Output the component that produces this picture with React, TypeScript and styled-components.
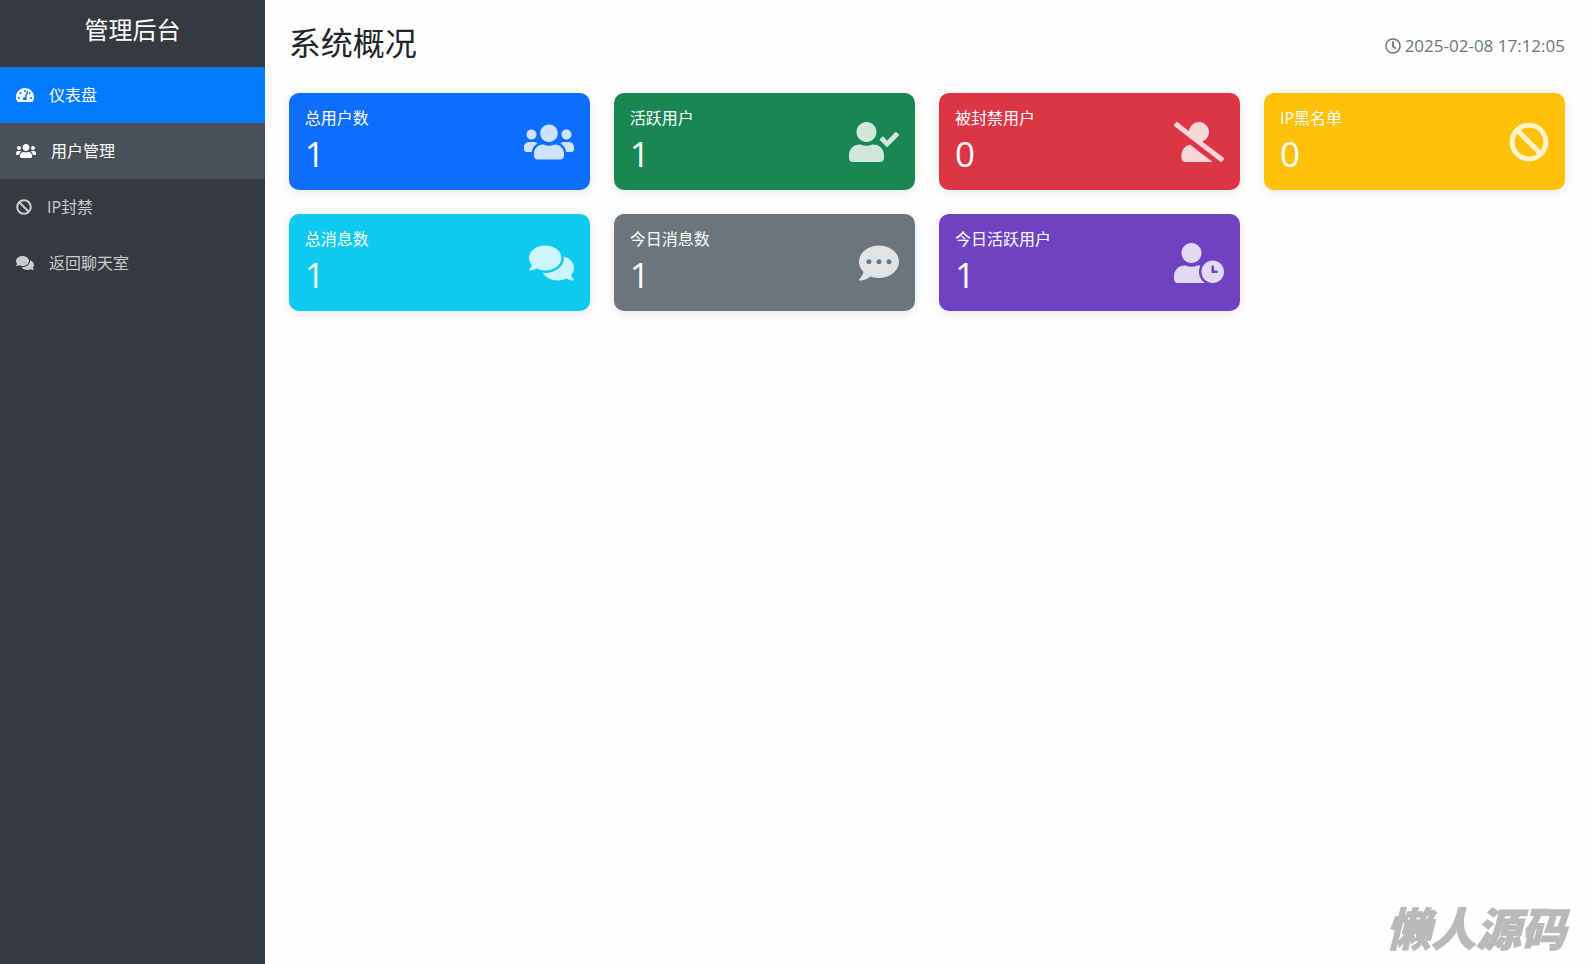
import React from 'react';
import styled, { createGlobalStyle } from 'styled-components';
import type { IconType } from 'react-icons';
import {
  FaBan,
  FaCommentDots,
  FaComments,
  FaRegClock,
  FaTachometerAlt,
  FaUserCheck,
  FaUserClock,
  FaUsers,
  FaUserSlash,
} from 'react-icons/fa';

const GlobalStyle = createGlobalStyle`
  *, *::before, *::after { box-sizing: border-box; }
  body {
    margin: 0;
    background: #fefefe;
    color: #212529;
    font: 400 16px/24px 'Open Sans', 'Noto Sans CJK SC', sans-serif;
  }
`;

const Page = styled.div`
  display: flex;
  min-height: 100vh;
`;

const Sidebar = styled.aside`
  flex: 0 0 calc(100% / 6);
  background: #343a40;
  color: #fff;
`;

const Brand = styled.h2`
  margin: 0;
  padding: 15px 16px 23px;
  font-size: 24px;
  line-height: 29px;
  font-weight: 400;
  text-align: center;
`;

const NavLink = styled.a<{ $state?: 'active' | 'hover'; $iconWidth: number }>`
  display: flex;
  align-items: center;
  gap: 15px;
  padding: 16px;
  color: ${({ $state }) => ($state ? '#fff' : 'rgba(255, 255, 255, 0.75)')};
  background: ${({ $state }) =>
    $state === 'active' ? '#007bff' : $state === 'hover' ? '#495057' : 'transparent'};
  text-decoration: none;

  svg {
    height: 16px;
    width: ${({ $iconWidth }) => $iconWidth}px;
  }
`;

const Main = styled.main`
  flex: 1;
  min-width: 0;
  padding: 24px;
`;

const Header = styled.header`
  display: flex;
  justify-content: space-between;
  align-items: center;
  margin-bottom: 24px;
`;

const Title = styled.h1`
  margin: 0 0 7px;
  font-size: 32px;
  line-height: 38px;
  font-weight: 400;
`;

const Clock = styled.div`
  display: flex;
  align-items: center;
  gap: 4px;
  padding-bottom: 2px;
  color: #6c757d;
  font-size: 17px;

  svg {
    width: 16px;
    height: 16px;
  }
`;

const Grid = styled.section`
  display: grid;
  grid-template-columns: repeat(4, minmax(0, 1fr));
  gap: 24px;
`;

const Card = styled.article<{ $color: string; $iconWidth: number }>`
  display: flex;
  justify-content: space-between;
  align-items: center;
  padding: 16px;
  border-radius: 10px;
  background: ${({ $color }) => $color};
  color: #fff;
  box-shadow: 0 2px 10px rgba(0, 0, 0, 0.1);

  svg {
    height: 40px;
    width: ${({ $iconWidth }) => $iconWidth}px;
    opacity: 0.8;
  }
`;

const Label = styled.h3`
  margin: 0;
  font-size: 16px;
  line-height: 18px;
  font-weight: 400;
`;

const Value = styled.p`
  margin: 0;
  padding-top: 7px;
  font-size: 35px;
  line-height: 40px;
`;

const Watermark = styled.div`
  position: fixed;
  right: 23px;
  bottom: 10px;
  color: #b9b9b9;
  font: italic 900 45px/54px 'Noto Sans CJK SC', sans-serif;
  -webkit-text-stroke: 1px #b9b9b9;
  pointer-events: none;
`;

const links: { text: string; icon: IconType; iconWidth: number; state?: 'active' | 'hover' }[] = [
  { text: '仪表盘', icon: FaTachometerAlt, iconWidth: 18, state: 'active' },
  { text: '用户管理', icon: FaUsers, iconWidth: 20, state: 'hover' },
  { text: 'IP封禁', icon: FaBan, iconWidth: 16 },
  { text: '返回聊天室', icon: FaComments, iconWidth: 18 },
];

const stats: { label: string; value: number; color: string; icon: IconType; iconWidth: number }[] = [
  { label: '总用户数', value: 1, color: '#0d6efd', icon: FaUsers, iconWidth: 50 },
  { label: '活跃用户', value: 1, color: '#198754', icon: FaUserCheck, iconWidth: 50 },
  { label: '被封禁用户', value: 0, color: '#dc3545', icon: FaUserSlash, iconWidth: 50 },
  { label: 'IP黑名单', value: 0, color: '#ffc107', icon: FaBan, iconWidth: 40 },
  { label: '总消息数', value: 1, color: '#0dcaf0', icon: FaComments, iconWidth: 45 },
  { label: '今日消息数', value: 1, color: '#6c757d', icon: FaCommentDots, iconWidth: 40 },
  { label: '今日活跃用户', value: 1, color: '#6f42c1', icon: FaUserClock, iconWidth: 50 },
];

export default function App() {
  return (
    <Page>
      <GlobalStyle />
      <Sidebar>
        <Brand>管理后台</Brand>
        <nav>
          {links.map(({ text, icon: Icon, iconWidth, state }) => (
            <NavLink key={text} href="#" $state={state} $iconWidth={iconWidth}>
              <Icon aria-hidden />
              <span>{text}</span>
            </NavLink>
          ))}
        </nav>
      </Sidebar>
      <Main>
        <Header>
          <Title>系统概况</Title>
          <Clock>
            <FaRegClock aria-hidden />
            <time dateTime="2025-02-08T17:12:05">2025-02-08 17:12:05</time>
          </Clock>
        </Header>
        <Grid>
          {stats.map(({ label, value, color, icon: Icon, iconWidth }) => (
            <Card key={label} $color={color} $iconWidth={iconWidth}>
              <div>
                <Label>{label}</Label>
                <Value>{value}</Value>
              </div>
              <Icon aria-hidden />
            </Card>
          ))}
        </Grid>
      </Main>
      <Watermark>懒人源码</Watermark>
    </Page>
  );
}
